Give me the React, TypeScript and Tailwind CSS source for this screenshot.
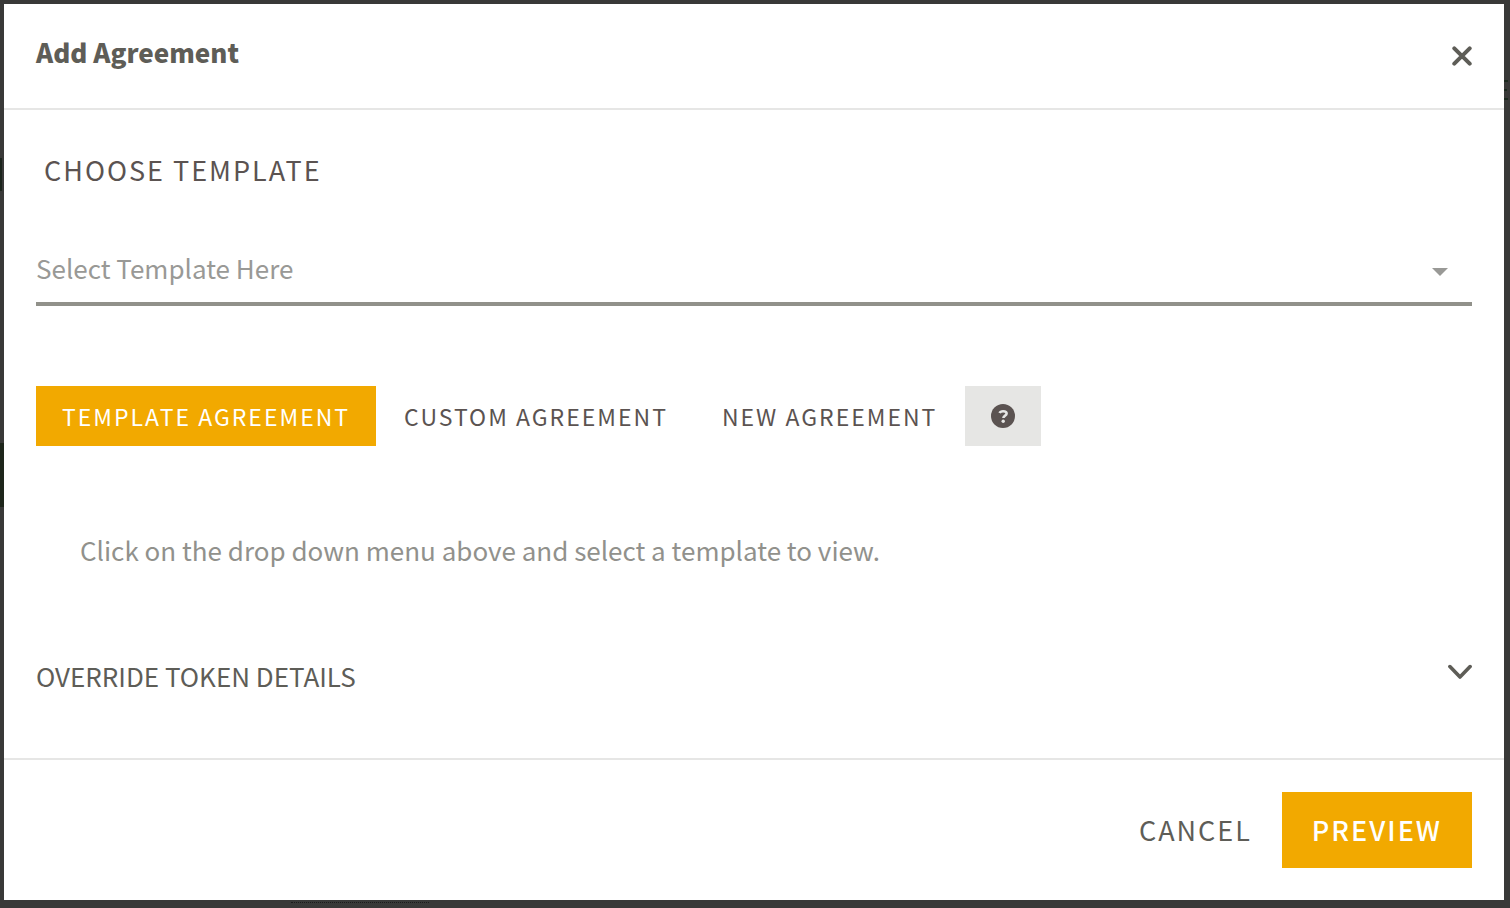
import { useState } from "react";
import clsx from "clsx";

const tabs = [
  { id: "template", label: "Template Agreement" },
  { id: "custom", label: "Custom Agreement" },
  { id: "new", label: "New Agreement" },
];

const CloseIcon = () => (
  <svg width="20" height="20" viewBox="0 0 20 20" aria-hidden="true">
    <path
      d="M2.3 2.3 17.7 17.7M17.7 2.3 2.3 17.7"
      stroke="currentColor"
      strokeWidth="4"
      strokeLinecap="round"
    />
  </svg>
);

const ChevronIcon = () => (
  <svg width="24" height="16" viewBox="0 0 24 16" aria-hidden="true">
    <path
      d="M1.9 2.6 12 13 22.1 2.6"
      fill="none"
      stroke="currentColor"
      strokeWidth="3.6"
      strokeLinecap="round"
      strokeLinejoin="round"
    />
  </svg>
);

const HelpIcon = () => (
  <svg width="24" height="24" viewBox="0 0 24 24" aria-hidden="true">
    <circle cx="12" cy="12" r="12" fill="#5b5351" />
    <path
      d="M8.6 9C9.1 7.8 10.4 7.2 12.1 7.2c2.1 0 3.5.9 3.5 2.4 0 2.2-3.2 2-3.2 4.5"
      fill="none"
      stroke="#e6e6e4"
      strokeWidth="2.6"
    />
    <circle cx="12.2" cy="17.3" r="1.7" fill="#e6e6e4" />
  </svg>
);

// slivers of the dimmed page that show round the dialog
const PageBehind = () => (
  <div className="absolute inset-0 overflow-hidden" aria-hidden="true">
    <div className="absolute left-0 top-[158px] h-[33px] w-0.5 bg-[#1c241c]" />
    <div className="absolute left-0 top-[443px] h-16 w-1 bg-[#1e261b]" />
    <div className="absolute right-0.5 top-20 flex w-1 flex-col gap-[7px]">
      <div className="h-0.5 bg-[#1c2a1f]" />
      <div className="h-0.5 w-[3px] bg-[#1c2a1f]" />
      <div className="h-0.5 bg-[#1c2a1f]" />
    </div>
    <div className="absolute bottom-[5px] left-[291px] w-[138px] border-t border-dotted border-[#1d1d1d]" />
  </div>
);

export default function App() {
  const [tab, setTab] = useState("template");

  return (
    <div className="relative flex min-h-screen flex-col bg-[#393938] pt-1 pr-1.5 pb-2 pl-1 font-['Noto_Sans_CJK_SC',sans-serif] text-[26px] leading-10 text-[#5e5d57]">
      <PageBehind />
      <div
        role="dialog"
        aria-labelledby="dialog-title"
        className="relative flex grow flex-col bg-white"
      >
        <header className="flex items-center justify-between border-b-2 border-[#e6e6e5] px-8 pt-7 pb-9">
          <h1 id="dialog-title" className="font-black">
            Add Agreement
          </h1>
          <button type="button" aria-label="Close" className="pt-2">
            <CloseIcon />
          </button>
        </header>

        <main className="grow px-8 pt-10">
          <label
            htmlFor="template"
            className="block px-2 text-[27px] tracking-[2px] text-[#5b5351] uppercase"
          >
            Choose Template
          </label>
          <div className="relative mt-12">
            <select
              id="template"
              defaultValue=""
              className="h-[68px] w-full appearance-none border-b-4 border-[#91918a] bg-transparent pb-1 text-[#999996] outline-none"
            >
              <option value="">Select Template Here</option>
            </select>
            <svg
              width="16"
              height="8"
              viewBox="0 0 16 8"
              className="pointer-events-none absolute top-[30px] right-6"
              aria-hidden="true"
            >
              <path d="M0 0h16L8 8z" fill="#999996" />
            </svg>
          </div>

          <div className="mt-20 flex gap-0.5 text-[23px]">
            {tabs.map((item) => (
              <button
                key={item.id}
                type="button"
                onClick={() => setTab(item.id)}
                className={clsx(
                  "h-[60px] px-[26px] tracking-[2px] whitespace-nowrap uppercase",
                  tab === item.id ? "bg-[#f2a900] text-white" : "text-[#5b5351]"
                )}
              >
                {item.label}
              </button>
            ))}
            <button
              type="button"
              aria-label="Help"
              className="flex h-[60px] w-[76px] items-center justify-center bg-[#e6e6e4]"
            >
              <HelpIcon />
            </button>
          </div>

          <p className="mt-[84px] px-11 text-[#91918c]">
            Click on the drop down menu above and select a template to view.
          </p>

          <button
            type="button"
            aria-expanded="false"
            className="mt-[86px] mb-[62px] flex w-full items-center justify-between uppercase"
          >
            Override Token Details
            <span className="pb-2">
              <ChevronIcon />
            </span>
          </button>
        </main>

        <footer className="flex justify-end border-t-2 border-[#e6e6e5] px-8 py-8 text-[27px]">
          <button
            type="button"
            className="h-[76px] px-[30px] tracking-[2px] uppercase"
          >
            Cancel
          </button>
          <button
            type="button"
            className="h-[76px] bg-[#f2a900] px-[30px] font-medium tracking-[2px] text-white uppercase"
          >
            Preview
          </button>
        </footer>
      </div>
    </div>
  );
}
